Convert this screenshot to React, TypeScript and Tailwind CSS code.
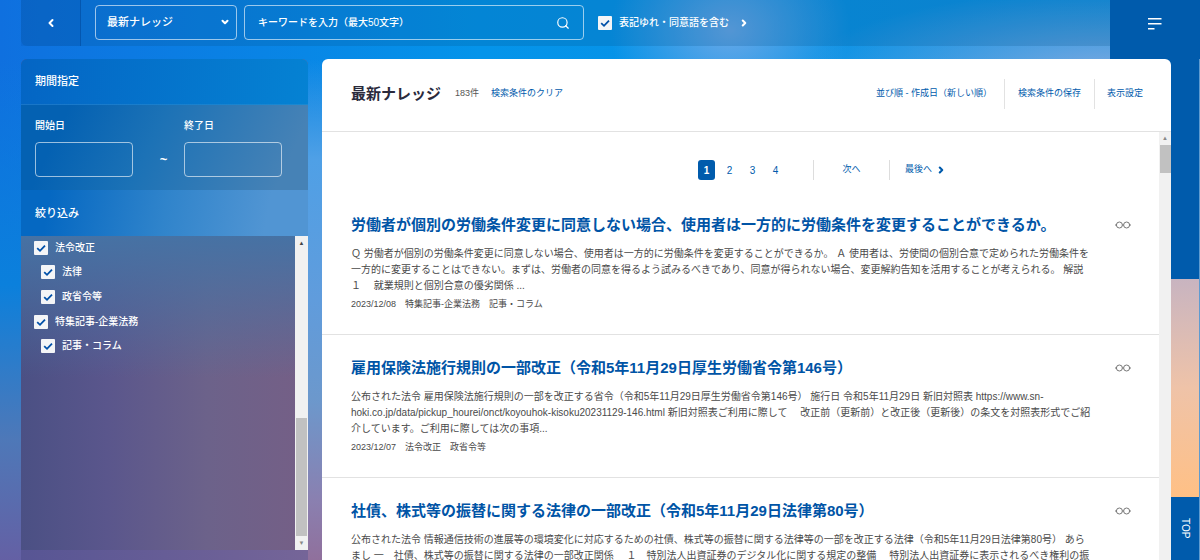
import { useState } from "react";
import { ChevronDown, ChevronLeft, ChevronRight, Search } from "lucide-react";

type Category = { id: string; label: string; child?: boolean };
type Article = { title: string; lines: string[]; meta?: string };

const categories: Category[] = [
  { id: "law-rev", label: "法令改正" },
  { id: "law", label: "法律", child: true },
  { id: "ordinance", label: "政省令等", child: true },
  { id: "feature", label: "特集記事-企業法務" },
  { id: "column", label: "記事・コラム", child: true },
];

const articles: Article[] = [
  {
    title: "労働者が個別の労働条件変更に同意しない場合、使用者は一方的に労働条件を変更することができるか。",
    lines: [
      "Ｑ 労働者が個別の労働条件変更に同意しない場合、使用者は一方的に労働条件を変更することができるか。 Ａ 使用者は、労使間の個別合意で定められた労働条件を",
      "一方的に変更することはできない。まずは、労働者の同意を得るよう試みるべきであり、同意が得られない場合、変更解約告知を活用することが考えられる。 解説",
      "１　 就業規則と個別合意の優劣関係 ...",
    ],
    meta: "2023/12/08　特集記事-企業法務　記事・コラム",
  },
  {
    title: "雇用保険法施行規則の一部改正（令和5年11月29日厚生労働省令第146号）",
    lines: [
      "公布された法令 雇用保険法施行規則の一部を改正する省令（令和5年11月29日厚生労働省令第146号） 施行日 令和5年11月29日 新旧対照表 https://www.sn-",
      "hoki.co.jp/data/pickup_hourei/onct/koyouhok-kisoku20231129-146.html 新旧対照表ご利用に際して　 改正前（更新前）と改正後（更新後）の条文を対照表形式でご紹",
      "介しています。ご利用に際しては次の事項...",
    ],
    meta: "2023/12/07　法令改正　政省令等",
  },
  {
    title: "社債、株式等の振替に関する法律の一部改正（令和5年11月29日法律第80号）",
    lines: [
      "公布された法令 情報通信技術の進展等の環境変化に対応するための社債、株式等の振替に関する法律等の一部を改正する法律（令和5年11月29日法律第80号） あら",
      "まし 一　社債、株式等の振替に関する法律の一部改正関係　 １　特別法人出資証券のデジタル化に関する規定の整備　 特別法人出資証券に表示されるべき権利の振",
    ],
  },
];

function CheckBox({ id }: { id: string }) {
  const [on, setOn] = useState(true);
  return (
    <span className="relative block size-[14px] shrink-0">
      <input
        id={id}
        type="checkbox"
        checked={on}
        onChange={(e) => setOn(e.target.checked)}
        className="block size-full appearance-none rounded-[1px] bg-[#f4f5f7]"
      />
      {on && (
        <svg viewBox="0 0 14 14" className="pointer-events-none absolute inset-0" fill="none" stroke="#0050a8" strokeWidth="1.8">
          <path d="M3.2 7.2 6 9.8l5-5.2" />
        </svg>
      )}
    </span>
  );
}

function Glasses() {
  return (
    <svg viewBox="0 0 16 8" className="h-2 w-4" fill="none" stroke="#777" strokeWidth="1">
      <circle cx="4.4" cy="4" r="3" />
      <circle cx="11.6" cy="4" r="3" />
      <path d="M0 4h1.4M7.4 4h1.2M14.6 4H16" />
    </svg>
  );
}

function DateField({ id, label }: { id: string; label: string }) {
  return (
    <div className="w-[98px]">
      <label htmlFor={id} className="block h-4 text-[10px] leading-4 font-medium">
        {label}
      </label>
      <input id={id} type="text" className="mt-2 block h-[35px] w-full rounded border border-white/60 bg-transparent px-2 text-[10px]" />
    </div>
  );
}

function TopBar() {
  return (
    <header className="flex shrink-0 items-start pl-[21px] text-white">
      <div className="flex h-[46px] flex-1 items-start rounded-bl-md bg-[#004a80]/20">
        <button type="button" aria-label="戻る" className="flex h-full w-[60px] items-center justify-center border-r border-[#00408c]/40 bg-[#0044a0]/15">
          <ChevronLeft className="size-3" strokeWidth={4} />
        </button>
        <div className="relative mt-[5px] ml-3.5 w-[142px]">
          <select aria-label="検索対象" className="h-[35px] w-full appearance-none rounded border border-white/60 bg-transparent pl-[11px] text-[11px] font-medium">
            <option>最新ナレッジ</option>
          </select>
          <ChevronDown className="pointer-events-none absolute top-3 right-[7px] size-2.5" strokeWidth={5} />
        </div>
        <div className="mt-[5px] ml-[7px] flex h-[35px] w-[340px] items-center rounded border border-white/60 px-[13px]">
          <input
            type="text"
            aria-label="キーワード"
            placeholder="キーワードを入力（最大50文字）"
            className="min-w-0 flex-1 bg-transparent text-[10px] font-medium outline-none placeholder:text-white"
          />
          <button type="button" aria-label="検索">
            <Search className="size-3.5" strokeWidth={2} />
          </button>
        </div>
        <div className="mt-[5px] ml-3.5 flex h-[35px] items-center">
          <CheckBox id="synonym" />
          <label htmlFor="synonym" className="ml-[7px] text-[10px] font-medium">
            表記ゆれ・同意語を含む
          </label>
          <ChevronRight className="ml-2.5 size-2.5" strokeWidth={5} />
        </div>
      </div>
      <button type="button" aria-label="メニュー" className="flex h-[59px] w-[90px] justify-center bg-[#005bac] pt-4">
        <svg viewBox="0 0 14 14" className="size-3.5" fill="none" stroke="#fff" strokeWidth="1.5">
          <path d="M0 2.8h13.5M0 7.8h13.5M0 12.8h6.5" />
        </svg>
      </button>
    </header>
  );
}

function Sidebar() {
  return (
    <aside className="flex w-[287px] shrink-0 flex-col overflow-hidden rounded-t-md bg-[linear-gradient(90deg,#575594,#756598)] text-white">
      <h2 className="flex h-[46px] shrink-0 items-center border-b border-[#4b9ad0]/30 bg-[linear-gradient(100deg,#0465c4,#0582d3)] pl-3.5 text-[11px] font-medium">
        期間指定
      </h2>
      <div className="flex h-[85px] shrink-0 items-start bg-[linear-gradient(115deg,#0461b2_15%,#1c72b6_45%,#4682b6_90%)] pt-[13px] pl-3.5">
        <DateField id="from" label="開始日" />
        <span className="mt-8 w-[51px] pl-2.5 text-center text-[13px] leading-5 font-bold">~</span>
        <DateField id="to" label="終了日" />
      </div>
      <h2 className="flex h-[46px] shrink-0 items-center bg-[linear-gradient(100deg,#0568c2_10%,#3084cb_50%,#5195d3_85%)] pl-3.5 text-[11px] font-medium">
        絞り込み
      </h2>
      <div className="flex h-[314px] shrink-0 bg-[linear-gradient(180deg,#4672a4,#4672a400_45%),linear-gradient(90deg,#4b5084,#5a568c_30%,#6c628a_65%,#755f86)]">
        <ul className="flex-1 pt-0.5 pl-[13px]">
          {categories.map((c) => (
            <li key={c.id} className={c.child ? "flex h-[25px] items-start pt-[3px] pl-[7px]" : "flex h-6 items-start pt-[3px]"}>
              <CheckBox id={c.id} />
              <label htmlFor={c.id} className="ml-[7px] text-[10px] leading-[14px] font-medium">
                {c.label}
              </label>
            </li>
          ))}
        </ul>
        <div className="flex w-[13px] flex-col items-center bg-[#f1f1f1]">
          <span className="flex h-[14px] items-center text-[6px] text-[#444]">▲</span>
          <span className="flex-1" />
          <span className="h-[118px] w-[11px] bg-[#c1c1c1]" />
          <span className="flex h-[14px] items-center text-[6px] text-[#888]">▼</span>
        </div>
      </div>
    </aside>
  );
}

function Pagination() {
  return (
    <nav className="flex h-[60px] items-center pt-4 pl-[376px] text-[10px] text-[#005bac]">
      <div className="flex gap-1.5">
        <a href="#p1" className="flex h-5 w-[17px] items-center justify-center rounded-[3px] bg-[#005bac] font-bold text-white">
          1
        </a>
        {[2, 3, 4].map((n) => (
          <a key={n} href={`#p${n}`} className="flex h-5 w-[17px] items-center justify-center">
            {n}
          </a>
        ))}
      </div>
      <a href="#next" className="ml-[29px] flex h-5 w-[77px] items-center justify-center border-x border-[#ddd] text-[9px]">
        次へ
      </a>
      <a href="#last" className="ml-[15px] flex items-center gap-1 text-[9px]">
        最後へ
        <ChevronRight className="size-2.5" strokeWidth={5} />
      </a>
    </nav>
  );
}

function Results() {
  return (
    <main className="z-10 flex min-w-0 flex-1 flex-col overflow-hidden rounded-t-md bg-white">
      <div className="flex h-[73px] shrink-0 items-center border-b border-[#e2e2e2] pr-7 pb-0.5 pl-[29px] text-[9px] text-[#005bac]">
        <h1 className="text-[15px] font-bold text-[#2a2a3c]">最新ナレッジ</h1>
        <span className="ml-3.5 text-[#555]">183件</span>
        <a href="#clear" className="ml-3">
          検索条件のクリア
        </a>
        <button type="button" className="mr-3 ml-auto">
          並び順 - 作成日（新しい順）
        </button>
        <button type="button" className="h-[30px] border-x border-[#e2e2e2] px-[13px]">
          検索条件の保存
        </button>
        <button type="button" className="ml-3">
          表示設定
        </button>
      </div>
      <div className="flex min-h-0 flex-1 overflow-hidden">
        <div className="min-w-0 flex-1">
          <Pagination />
          {articles.map((a) => (
            <article key={a.title} className="h-[143px] border-b border-[#e2e2e2] pt-[23px] pr-7 pl-[29px]">
              <div className="flex h-5 items-center justify-between">
                <h2 className="text-[15px] leading-5 font-bold whitespace-nowrap text-[#0054a6]">
                  <a href="#article">{a.title}</a>
                </h2>
                <button type="button" aria-label="プレビュー">
                  <Glasses />
                </button>
              </div>
              <p className="mt-[11px] text-[10px] leading-4 whitespace-nowrap text-[#4a4a4a]">
                {a.lines.map((line) => (
                  <span key={line} className="block">
                    {line}
                  </span>
                ))}
              </p>
              {a.meta && <p className="mt-0.5 text-[9px] leading-4 text-[#4a4a4a]">{a.meta}</p>}
            </article>
          ))}
        </div>
        <div className="flex w-3 shrink-0 flex-col items-center bg-[#f1f1f1]">
          <span className="flex h-[13px] items-center text-[6px] text-[#888]">▲</span>
          <span className="h-7 w-[11px] bg-[#c1c1c1]" />
        </div>
      </div>
    </main>
  );
}

export default function App() {
  return (
    <div className="flex h-screen flex-col overflow-hidden bg-[radial-gradient(ellipse_120px_100px_at_730px_30px,#68a8e8,#68a8e800),radial-gradient(ellipse_300px_80px_at_1110px_70px,#78a8e0,#78a8e000),linear-gradient(90deg,#0f70df,#0494ea_40%,#1090e0)] font-['Liberation_Sans','Noto_Sans_CJK_JP',sans-serif]">
      <TopBar />
      <div className="flex min-h-0 flex-1 bg-[linear-gradient(180deg,#0b80dc00,#0b80dc_45%,#4e78b8_76%,#6460a4)] pl-[21px]">
        <Sidebar />
        <div className="w-3.5 shrink-0 bg-[linear-gradient(180deg,#4fa0e600,#4fa0e6_20%,#609cdc_48%,#6c98cc_68%,#8a80b0_88%,#90709c)]" />
        <Results />
        <div className="-ml-2 flex w-[37px] shrink-0 flex-col border-r border-[#5f9bd0] pl-2">
          <div className="-ml-2 h-[220px] bg-[#005bac]" />
          <div className="flex-1 bg-linear-to-b from-[#c8b4c0] via-[#efc3a8] via-50% to-[#ffc085]" />
          <a href="#top" className="flex h-[63px] items-center justify-center bg-[#005bac] text-[10px] text-white [writing-mode:vertical-rl]">
            TOP
          </a>
        </div>
      </div>
    </div>
  );
}
